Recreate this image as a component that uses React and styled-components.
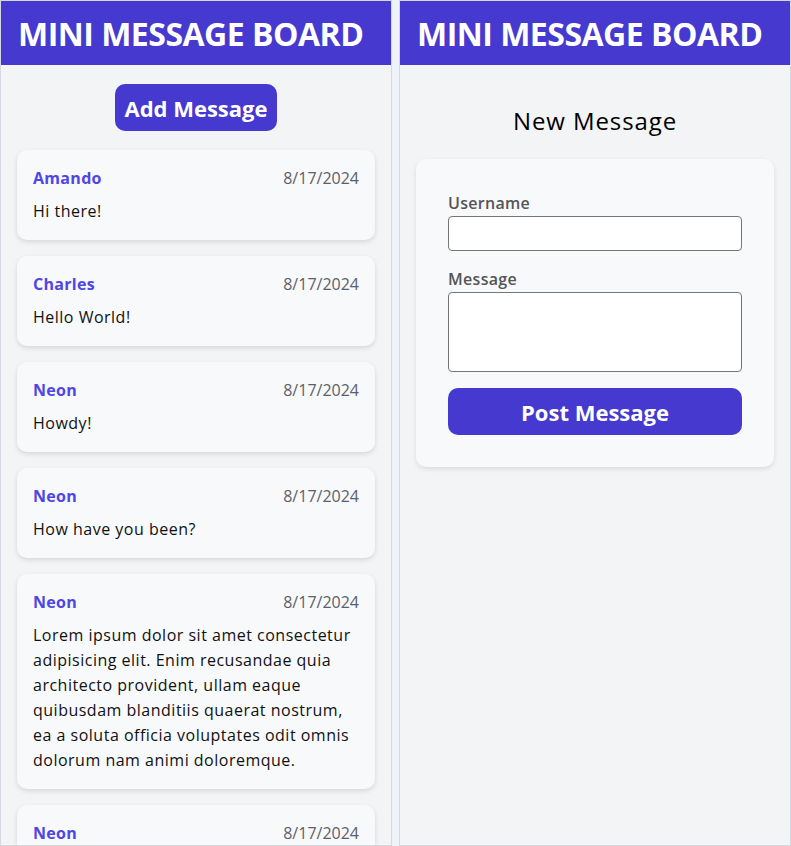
import React from 'react';
import styled, { createGlobalStyle } from 'styled-components';

const GlobalStyle = createGlobalStyle`
  body {
    margin: 0;
    background: #eef2fb;
    font-family: "Open Sans", "Liberation Sans", sans-serif;
  }
  * { box-sizing: border-box; }
`;

const Page = styled.div`
  display: flex;
  gap: 7px;
  height: 846px;
`;

const Frame = styled.div`
  width: 392px;
  height: 846px;
  border: 1px solid #d4d8e0;
  background: #f3f4f6;
  overflow: hidden;
  display: flex;
  flex-direction: column;
`;

const Header = styled.header`
  height: 64px;
  flex-shrink: 0;
  background: #4539cf;
  display: flex;
  align-items: center;
  padding-left: 17px;
`;

const Title = styled.h1`
  margin: 0;
  color: #fff;
  font-size: 32px;
  font-weight: 700;
  letter-spacing: -0.5px;
`;

const Feed = styled.div`
  display: flex;
  flex-direction: column;
  align-items: center;
  padding: 19px 16px 0;
  gap: 16px;
`;

const AddButton = styled.button`
  height: 47px;
  padding: 0 9px;
  margin-bottom: 3px;
  border: none;
  border-radius: 10px;
  background: #4539cf;
  color: #fff;
  font-family: inherit;
  font-size: 22px;
  font-weight: 700;
`;

const Card = styled.div`
  width: 100%;
  background: #f8f9fb;
  border-radius: 10px;
  padding: 16px 16px 16px;
  box-shadow: 0 2px 5px rgba(0, 0, 0, 0.12);
`;

const CardTop = styled.div`
  display: flex;
  justify-content: space-between;
  align-items: center;
  height: 24px;
  margin-bottom: 9px;
`;

const Author = styled.span`
  color: #4f46e5;
  font-size: 16px;
  font-weight: 700;
  letter-spacing: 0.3px;
`;

const Date = styled.span`
  color: #5b606a;
  font-size: 16px;
  font-weight: 400;
`;

const Body = styled.p`
  margin: 0;
  color: #111;
  font-size: 16px;
  line-height: 25px;
  letter-spacing: 0.5px;
`;

const Composer = styled.div`
  padding: 38px 16px 0;
  display: flex;
  flex-direction: column;
  align-items: stretch;
`;

const Heading = styled.h2`
  margin: 0 0 20px;
  height: 36px;
  line-height: 36px;
  text-align: center;
  font-size: 24px;
  font-weight: 500;
  letter-spacing: 0.9px;
  color: #000;
`;

const FormCard = styled.form`
  background: #f8f9fb;
  border-radius: 10px;
  padding: 32px;
  box-shadow: 0 2px 5px rgba(0, 0, 0, 0.1);
  display: flex;
  flex-direction: column;
`;

const Label = styled.label`
  display: block;
  height: 24px;
  line-height: 24px;
  color: #555;
  font-size: 16px;
  font-weight: 600;
  letter-spacing: 0.3px;
  margin-bottom: 1px;
`;

const Input = styled.input`
  width: 100%;
  height: 35px;
  border: 1px solid #767676;
  border-radius: 4px;
  background: #fff;
  margin-bottom: 16px;
`;

const TextArea = styled.textarea`
  width: 100%;
  height: 80px;
  border: 1px solid #767676;
  border-radius: 4px;
  background: #fff;
  resize: none;
  margin-bottom: 16px;
  display: block;
`;

const PostButton = styled.button`
  width: 100%;
  height: 47px;
  border: none;
  border-radius: 10px;
  background: #4539cf;
  color: #fff;
  font-family: inherit;
  font-size: 22px;
  font-weight: 700;
`;

const messages = [
  { name: 'Amando', text: 'Hi there!' },
  { name: 'Charles', text: 'Hello World!' },
  { name: 'Neon', text: 'Howdy!' },
  { name: 'Neon', text: 'How have you been?' },
  {
    name: 'Neon',
    text: 'Lorem ipsum dolor sit amet consectetur adipisicing elit. Enim recusandae quia architecto provident, ullam eaque quibusdam blanditiis quaerat nostrum, ea a soluta officia voluptates odit omnis dolorum nam animi doloremque.',
  },
  { name: 'Neon', text: 'Hey!' },
];

const App = () => {
  return (
    <>
      <GlobalStyle />
      <Page>
        <Frame>
          <Header>
            <Title>MINI MESSAGE BOARD</Title>
          </Header>
          <Feed>
            <AddButton>Add Message</AddButton>
            {messages.map((m, i) => (
              <Card key={i}>
                <CardTop>
                  <Author>{m.name}</Author>
                  <Date>8/17/2024</Date>
                </CardTop>
                <Body>{m.text}</Body>
              </Card>
            ))}
          </Feed>
        </Frame>
        <Frame>
          <Header>
            <Title>MINI MESSAGE BOARD</Title>
          </Header>
          <Composer>
            <Heading>New Message</Heading>
            <FormCard onSubmit={(e) => e.preventDefault()}>
              <Label>Username</Label>
              <Input type="text" />
              <Label>Message</Label>
              <TextArea />
              <PostButton type="submit">Post Message</PostButton>
            </FormCard>
          </Composer>
        </Frame>
      </Page>
    </>
  );
};

export default App;
